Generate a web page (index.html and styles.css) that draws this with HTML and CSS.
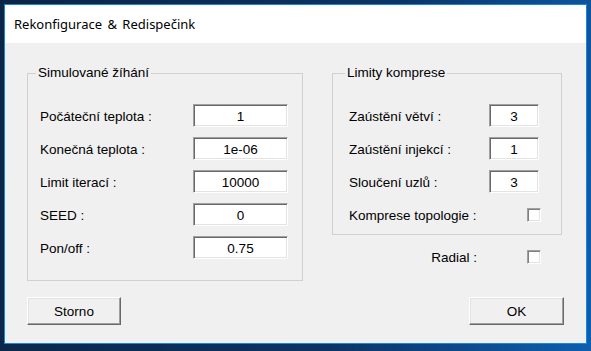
FILE: index.html
```html
<!DOCTYPE html>
<html>
<head>
<meta charset="utf-8">
<title>Rekonfigurace &amp; Redispečink</title>
<link rel="stylesheet" href="styles.css">
</head>
<body>
<div class="window">
    <div class="titlebar">Rekonfigurace &amp; Redispečink</div>
    <div class="dialog">
        <fieldset class="group group-sa">
            <legend>Simulované žíhání</legend>
            <div class="row"><label>Počáteční teplota :</label><input class="field field-wide" value="1"></div>
            <div class="row"><label>Konečná teplota :</label><input class="field field-wide" value="1e-06"></div>
            <div class="row"><label>Limit iterací :</label><input class="field field-wide" value="10000"></div>
            <div class="row"><label>SEED :</label><input class="field field-wide" value="0"></div>
            <div class="row"><label>Pon/off :</label><input class="field field-wide" value="0.75"></div>
        </fieldset>
        <div class="right-col">
            <fieldset class="group group-limits">
                <legend>Limity komprese</legend>
                <div class="row"><label>Zaústění větví :</label><input class="field field-small" value="3"></div>
                <div class="row"><label>Zaústění injekcí :</label><input class="field field-small" value="1"></div>
                <div class="row"><label>Sloučení uzlů :</label><input class="field field-small" value="3"></div>
                <div class="row row-check"><label>Komprese topologie :</label><span class="check"></span></div>
            </fieldset>
            <div class="radial-row"><label>Radial :</label><span class="check"></span></div>
        </div>
        <div class="btn-cell"><button class="btn">Storno</button></div>
        <div class="btn-cell btn-cell-right"><button class="btn btn-ok">OK</button></div>
    </div>
</div>
</body>
</html>
```

FILE: styles.css
```css
html, body {
    margin: 0;
    height: 100%;
}

body {
    background: linear-gradient(100deg, #0a2547 0%, #0b3466 60%, #0d5fb0 100%);
    font-family: "Liberation Sans", Arial, sans-serif;
    font-size: 13.5px;
    color: #000;
    padding: 4px;
    box-sizing: border-box;
}

.window {
    width: 583px;
    height: 340px;
    box-sizing: border-box;
    border: 1px solid #1c86dd;
    background: #f0f0f0;
}

.titlebar {
    height: 38px;
    background: #fff;
    display: flex;
    align-items: center;
    padding-left: 9px;
    font-family: "Noto Sans", sans-serif;
    font-size: 13px;
    word-spacing: 2px;
}

.dialog {
    display: grid;
    grid-template-columns: 276px 232px;
    column-gap: 29px;
    row-gap: 16px;
    padding: 22px 0 0 22px;
}

.group {
    margin: 0;
    border: 1px solid #d0d0d0;
    padding: 0;
    min-width: 0;
}

.group legend {
    padding: 0 2px;
    margin-left: -4px;
    line-height: 16px;
}

.group-sa {
    padding: 23px 14px 21px 12px;
}

.group-limits {
    width: 230px;
    box-sizing: border-box;
    padding: 23px 22px 8px 16px;
}

.row {
    display: flex;
    align-items: center;
    justify-content: space-between;
    height: 23px;
    margin-bottom: 10px;
}

.row:last-child {
    margin-bottom: 0;
}

.row label {
    padding-top: 2px;
}

.row-check {
    margin-top: 3px;
}

.field {
    height: 23px;
    box-sizing: border-box;
    border: 1px solid;
    border-color: #a0a0a0 #fff #fff #a0a0a0;
    box-shadow: inset 1px 1px 0 #696969, inset -1px -1px 0 #e3e3e3;
    background: #fff;
    font: inherit;
    text-align: center;
    padding: 2px 0 0;
    outline: none;
}

.field-wide {
    width: 95px;
}

.field-small {
    width: 50px;
}

.check {
    width: 14px;
    height: 14px;
    box-sizing: border-box;
    border: 1px solid;
    border-color: #a0a0a0 #fff #fff #a0a0a0;
    box-shadow: inset 1px 1px 0 #808080, inset -1px -1px 0 #e3e3e3;
    background: #fff;
}

.row-check .check {
    margin-right: -2px;
}

.radial-row {
    display: flex;
    justify-content: flex-end;
    align-items: center;
    gap: 50px;
    margin-top: 15px;
    padding-right: 23px;
    height: 14px;
}

.btn-cell-right {
    display: flex;
    justify-content: flex-end;
}

.btn {
    height: 28px;
    width: 94px;
    box-sizing: border-box;
    border: 1px solid;
    border-color: #fff #696969 #696969 #fff;
    box-shadow: inset -1px -1px 0 #a0a0a0, inset 1px 1px 0 #e3e3e3;
    background: #f0f0f0;
    font: inherit;
    padding: 0;
}

.btn-ok {
    width: 95px;
}
```
